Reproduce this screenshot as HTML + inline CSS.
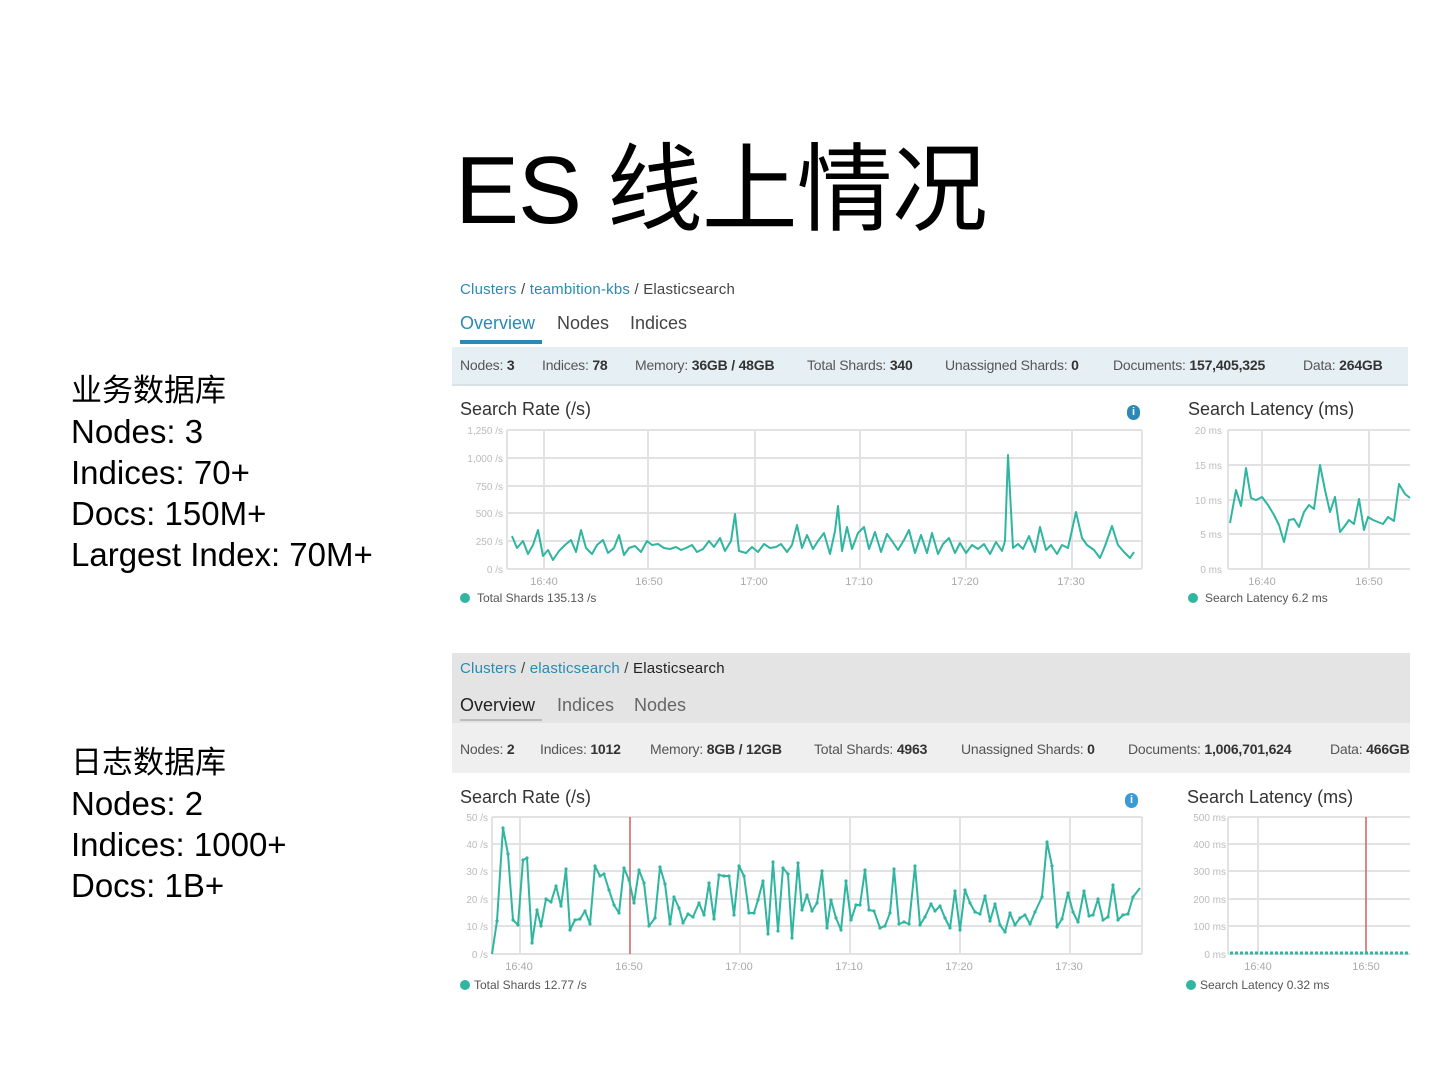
<!DOCTYPE html>
<html><head><meta charset="utf-8"><style>
body{margin:0;width:1440px;height:1080px;background:#fff;position:relative;overflow:hidden;font-family:"Liberation Sans","Noto Sans CJK SC",sans-serif;}
.a{position:absolute;white-space:nowrap;}
.t{font-size:96px;color:#000;left:455px;top:112px;letter-spacing:-1px;}
.l{font-size:33px;color:#000;left:71px;line-height:41px;}
.s{font-size:15px;color:#444;letter-spacing:0.2px}
.b{color:#2a8ab5}
.st{font-size:14px;color:#555;letter-spacing:-0.2px}
.st b{color:#333}
.tab{font-size:18px;}
.info{width:13px;height:15px;border-radius:7px;color:#fff;font-size:11px;font-weight:bold;text-align:center;line-height:15px}
</style></head><body>
<div class="a t">ES 线上情况</div>
<div class="a l" style="top:369px"><span style="font-size:31px">业务数据库</span><br>Nodes: 3<br>Indices: 70+<br>Docs: 150M+<br>Largest Index: 70M+</div>
<div class="a l" style="top:741px"><span style="font-size:31px">日志数据库</span><br>Nodes: 2<br>Indices: 1000+<br>Docs: 1B+</div>

<!-- screenshot 1 -->
<div class="a s" style="left:460px;top:281px"><span class="b">Clusters</span> / <span class="b">teambition-kbs</span> / Elasticsearch</div>
<div class="a tab" style="left:460px;top:313px;color:#2a8ab5">Overview</div>
<div class="a tab" style="left:557px;top:313px;color:#444">Nodes</div>
<div class="a tab" style="left:630px;top:313px;color:#444">Indices</div>
<div class="a" style="left:460px;top:340px;width:82px;height:4px;background:#2a8ab5"></div>
<div class="a" style="left:452px;top:347px;width:956px;height:37px;background:#e6f0f4;border-bottom:2px solid #d8e2e6"></div>
<div class="a st" style="left:460px;top:357px">Nodes: <b>3</b></div>
<div class="a st" style="left:542px;top:357px">Indices: <b>78</b></div>
<div class="a st" style="left:635px;top:357px">Memory: <b>36GB / 48GB</b></div>
<div class="a st" style="left:807px;top:357px">Total Shards: <b>340</b></div>
<div class="a st" style="left:945px;top:357px">Unassigned Shards: <b>0</b></div>
<div class="a st" style="left:1113px;top:357px">Documents: <b>157,405,325</b></div>
<div class="a st" style="left:1303px;top:357px">Data: <b>264GB</b></div>
<div class="a" style="left:460px;top:399px;font-size:18px;color:#333">Search Rate (/s)</div>
<div class="a" style="left:1188px;top:399px;font-size:18px;color:#333">Search Latency (ms)</div>
<div class="a info" style="left:1127px;top:405px;background:#2a8ab5">i</div>
<div class="a" style="left:1187px;top:787px;font-size:18px;color:#333">Search Latency (ms)</div>

<!-- screenshot 2 headers -->
<div class="a" style="left:452px;top:653px;width:958px;height:70px;background:#e4e4e4"></div>
<div class="a" style="left:452px;top:723px;width:958px;height:50px;background:#efefef"></div>
<div class="a s" style="left:460px;top:660px"><span class="b">Clusters</span> / <span class="b">elasticsearch</span> / <span style="color:#222">Elasticsearch</span></div>
<div class="a tab" style="left:460px;top:695px;color:#222">Overview</div>
<div class="a tab" style="left:557px;top:695px;color:#666">Indices</div>
<div class="a tab" style="left:634px;top:695px;color:#666">Nodes</div>
<div class="a" style="left:460px;top:719px;width:82px;height:2px;background:#bbb"></div>
<div class="a st" style="left:460px;top:741px">Nodes: <b>2</b></div>
<div class="a st" style="left:540px;top:741px">Indices: <b>1012</b></div>
<div class="a st" style="left:650px;top:741px">Memory: <b>8GB / 12GB</b></div>
<div class="a st" style="left:814px;top:741px">Total Shards: <b>4963</b></div>
<div class="a st" style="left:961px;top:741px">Unassigned Shards: <b>0</b></div>
<div class="a st" style="left:1128px;top:741px">Documents: <b>1,006,701,624</b></div>
<div class="a st" style="left:1330px;top:741px;width:80px;overflow:hidden">Data: <b>466GB</b></div>
<div class="a" style="left:460px;top:787px;font-size:18px;color:#333">Search Rate (/s)</div>
<div class="a info" style="left:1125px;top:793px;background:#3a9ad5">i</div>

<svg class="a" style="left:0;top:0" width="1440" height="1080">
<defs><marker id="m" markerWidth="4" markerHeight="4" refX="2" refY="2" markerUnits="userSpaceOnUse"><circle cx="2" cy="2" r="1.6" fill="#2fb5a0"/></marker></defs>
<g stroke="#e2e2e2" stroke-width="2" fill="none">
<path d="M507 430H1142M507 458H1142M507 486H1142M507 513H1142M507 541H1142M507 569H1142M507 430V569M1142 430V569M544 430V569M648 430V569M755 430V569M860 430V569M966 430V569M1072 430V569"/>
<path d="M1228 430H1410M1228 465H1410M1228 500H1410M1228 534H1410M1228 569H1410M1228 430V569M1262 430V569M1369 430V569"/>
<path d="M492 817H1142M492 844H1142M492 871H1142M492 899H1142M492 926H1142M492 954H1142M492 817V954M1142 817V954M520 817V954M740 817V954M850 817V954M960 817V954M1070 817V954"/>
<path d="M1228 817H1410M1228 844H1410M1228 871H1410M1228 899H1410M1228 926H1410M1228 954H1410M1228 817V954M1258 817V954"/>
</g>
<path d="M630 817V954M1366 817V954" stroke="#d06060" stroke-width="1.5"/>
<g font-family="Liberation Sans,sans-serif" font-size="10" fill="#bbb" text-anchor="end">
<text x="503" y="434">1,250 /s</text><text x="503" y="462">1,000 /s</text><text x="503" y="490">750 /s</text><text x="503" y="517">500 /s</text><text x="503" y="545">250 /s</text><text x="503" y="573">0 /s</text>
<text x="1222" y="434">20 ms</text><text x="1222" y="469">15 ms</text><text x="1222" y="504">10 ms</text><text x="1222" y="538">5 ms</text><text x="1222" y="573">0 ms</text>
<text x="488" y="821">50 /s</text><text x="488" y="848">40 /s</text><text x="488" y="875">30 /s</text><text x="488" y="903">20 /s</text><text x="488" y="930">10 /s</text><text x="488" y="958">0 /s</text>
<text x="1226" y="821">500 ms</text><text x="1226" y="848">400 ms</text><text x="1226" y="875">300 ms</text><text x="1226" y="903">200 ms</text><text x="1226" y="930">100 ms</text><text x="1226" y="958">0 ms</text>
</g>
<g font-family="Liberation Sans,sans-serif" font-size="11" fill="#aaa" text-anchor="middle">
<text x="544" y="585">16:40</text><text x="649" y="585">16:50</text><text x="754" y="585">17:00</text><text x="859" y="585">17:10</text><text x="965" y="585">17:20</text><text x="1071" y="585">17:30</text>
<text x="1262" y="585">16:40</text><text x="1369" y="585">16:50</text>
<text x="519" y="970">16:40</text><text x="629" y="970">16:50</text><text x="739" y="970">17:00</text><text x="849" y="970">17:10</text><text x="959" y="970">17:20</text><text x="1069" y="970">17:30</text>
<text x="1258" y="970">16:40</text><text x="1366" y="970">16:50</text>
</g>
<g font-family="Liberation Sans,sans-serif" font-size="12" fill="#555">
<circle cx="465" cy="598" r="5" fill="#2fb5a0"/><text x="477" y="602">Total Shards  135.13 /s</text>
<circle cx="1193" cy="598" r="5" fill="#2fb5a0"/><text x="1205" y="602">Search Latency  6.2 ms</text>
<circle cx="465" cy="985" r="5" fill="#2fb5a0"/><text x="474" y="989">Total Shards 12.77 /s</text>
<circle cx="1191" cy="985" r="5" fill="#2fb5a0"/><text x="1200" y="989">Search Latency 0.32 ms</text>
</g>
<g fill="none" stroke="#2fb5a0" stroke-width="2" stroke-linejoin="round">
<polyline points="512,536 517,548 523,541 528,554 533,545 538,530 543,556 548,550 553,560 559,551 565,545 571,540 576,552 581,530 586,548 592,554 597,545 603,540 608,553 614,548 619,535 624,555 629,548 635,546 641,552 647,541 652,545 658,544 664,548 670,549 676,547 681,550 686,548 692,545 697,552 703,549 709,541 714,547 720,538 725,551 731,541 735,514 739,551 746,553 752,547 758,552 764,544 770,548 776,547 781,544 787,552 792,545 797,525 802,548 807,535 813,549 818,541 824,533 830,554 835,531 838,506 842,551 847,527 852,549 858,533 864,527 869,549 875,532 881,552 887,534 892,541 898,550 904,540 909,530 915,553 921,535 927,553 932,533 938,554 943,544 949,538 955,553 960,543 966,553 972,545 978,549 984,544 990,554 996,542 1002,551 1005,541 1008,455 1013,548 1018,544 1023,549 1029,536 1035,552 1040,527 1046,550 1051,545 1057,554 1062,545 1068,548 1076,512 1082,538 1087,545 1094,550 1100,558 1105,546 1112,526 1118,545 1124,552 1130,558 1134,552"/>
<polyline points="1230,523 1236,490 1241,506 1246,468 1251,498 1256,500 1262,497 1268,505 1274,515 1279,525 1284,542 1289,520 1294,519 1299,527 1304,512 1309,505 1314,509 1320,465 1325,490 1330,512 1335,497 1340,532 1344,527 1349,520 1354,524 1359,499 1364,530 1368,517 1373,520 1378,522 1383,524 1388,517 1394,521 1399,484 1405,494 1410,498"/>
<polyline marker-mid="url(#m)" points="492,954 497,921 503,828 508,854 513,920 518,925 523,860 527,858 532,943 537,910 541,926 546,899 551,902 556,886 561,906 566,869 570,930 575,920 580,919 585,911 590,924 595,866 600,876 604,874 609,890 614,905 619,913 624,868 629,880 634,903 639,870 644,883 649,926 655,918 660,867 665,884 670,924 674,897 679,908 683,923 688,914 693,917 699,903 704,915 709,883 714,919 719,875 724,876 729,876 734,915 739,866 744,876 749,913 754,913 758,900 763,881 768,934 773,862 778,931 783,868 788,874 792,938 798,863 802,910 807,895 812,911 817,903 822,871 827,928 831,900 836,918 841,930 846,881 851,920 856,905 860,905 865,870 869,910 874,911 880,928 885,926 890,913 894,869 899,924 904,922 909,924 915,866 920,925 925,917 931,904 935,911 940,906 945,918 950,928 955,891 960,930 965,890 970,903 975,912 980,914 985,896 990,921 995,904 1000,925 1005,932 1010,913 1015,925 1020,918 1025,915 1030,924 1035,912 1042,897 1047,842 1052,866 1057,927 1062,919 1068,893 1073,912 1078,922 1084,891 1089,916 1093,915 1098,899 1103,920 1108,917 1113,885 1118,920 1123,915 1128,914 1133,897 1140,888"/>
<path d="M1230 953H1410" stroke-width="3" stroke-dasharray="3 2"/>
</g>
</svg>
</body></html>
